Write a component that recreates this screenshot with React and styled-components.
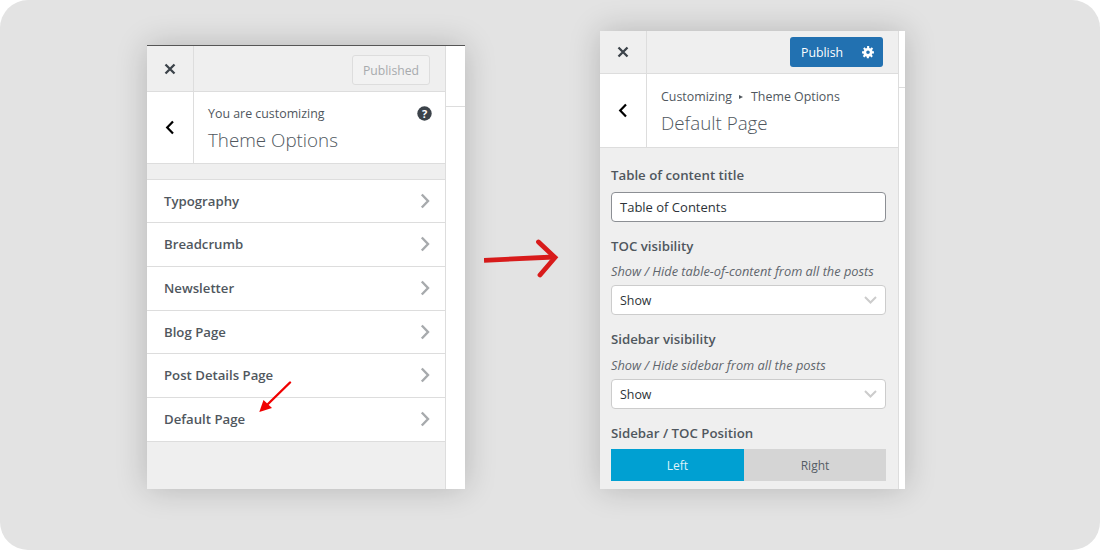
import React from 'react';
import styled, { createGlobalStyle } from 'styled-components';

const GlobalStyle = createGlobalStyle`
  html, body {
    margin: 0;
    background: #fff;
    font-family: "Open Sans", "Liberation Sans", sans-serif;
  }
  * { box-sizing: border-box; }
`;

const Stage = styled.div`
  width: 1100px;
  height: 550px;
  background: #e3e3e3;
  border-radius: 28px;
  padding: 0 0 61px 147px;
  display: flex;
  align-items: flex-end;
  overflow: hidden;
`;

const Shot = styled.div`
  position: relative;
  flex: none;
  width: ${p => p.$width}px;
  height: ${p => p.$height}px;
  background: #fff;
  box-shadow: 0 0 30px rgba(0, 0, 0, 0.2);
  border-top: ${p => (p.$topLine ? '1px solid #555' : 'none')};
  display: flex;
`;

const Panel = styled.div`
  width: ${p => p.$width}px;
  flex: none;
  height: 100%;
  background: #efefef;
  border-right: 1px solid #ddd;
  display: flex;
  flex-direction: column;
`;

const Side = styled.div`
  flex: 1;
  height: ${p => p.$lineAt}px;
  border-bottom: 1px solid #ddd;
`;

const Topbar = styled.div`
  height: ${p => p.$height}px;
  flex: none;
  display: flex;
  align-items: center;
  justify-content: space-between;
  border-bottom: 1px solid #ddd;
  padding-right: ${p => p.$pad}px;
`;

const CloseCell = styled.div`
  width: 47px;
  height: 100%;
  border-right: 1px solid #ddd;
  display: flex;
  align-items: center;
  justify-content: center;
  color: #3c434a;
`;

const PublishedButton = styled.div`
  width: 78px;
  height: 30px;
  margin-top: 2px;
  border: 1px solid #ddd;
  border-radius: 3px;
  background: #f2f2f2;
  color: #a7aaad;
  font-size: 12.2px;
  line-height: 30px;
  text-align: center;
`;

const PublishGroup = styled.div`
  width: 93px;
  height: 30px;
  background: #2271b1;
  border-radius: 3px;
  color: #fff;
  font-size: 12.3px;
  display: flex;
  align-items: center;
  justify-content: space-between;
  padding: 0 8px 0 11px;
`;

const Info = styled.div`
  height: ${p => p.$height}px;
  flex: none;
  background: #fff;
  border-bottom: 1px solid #ddd;
  display: flex;
`;

const BackCell = styled.div`
  width: 47px;
  flex: none;
  border-right: 1px solid #ddd;
  display: flex;
  align-items: center;
  justify-content: center;
  color: #000;
`;

const InfoText = styled.div`
  flex: 1;
  padding: ${p => p.$top}px 14px 0 14px;
  position: relative;
`;

const Crumb = styled.div`
  font-size: 12.4px;
  line-height: 18px;
  color: #50575e;
  display: flex;
  align-items: center;
`;

const CrumbMark = styled.span`
  width: 0;
  height: 0;
  margin: 0 8px 0 7px;
  border-left: 4px solid #50575e;
  border-top: 2.5px solid transparent;
  border-bottom: 2.5px solid transparent;
`;

const InfoTitle = styled.div`
  font-size: 18.8px;
  font-weight: 300;
  line-height: 26px;
  margin-top: 4px;
  color: #50575e;
`;

const HelpIcon = styled.svg`
  position: absolute;
  top: 14px;
  right: 13px;
`;

const List = styled.ul`
  list-style: none;
  margin: 15px 0 0;
  padding: 0;
  border-top: 1px solid #ddd;
`;

const Row = styled.li`
  height: 43.75px;
  background: #fff;
  border-bottom: 1px solid #ddd;
  display: flex;
  align-items: center;
  justify-content: space-between;
  padding: 0 15px 0.6px 17px;
  font-size: 13.2px;
  font-weight: 600;
  color: #50575e;

  &:first-child {
    height: 43px;
  }
`;

const Chevron = styled.svg`
  color: #a7aaad;
  flex: none;
`;

const ArrowSlot = styled.div`
  flex: none;
  width: 135px;
  height: 444px;
  padding: 190px 0 0 19px;
`;

const Form = styled.div`
  padding: 18px 12px 0 11px;
  display: flex;
  flex-direction: column;
`;

const Label = styled.div`
  font-size: 13.25px;
  font-weight: 600;
  line-height: 18px;
  color: #50575e;
`;

const Hint = styled.div`
  font-size: 12.8px;
  font-style: italic;
  line-height: 18px;
  margin-top: ${p => p.$top}px;
  color: #5f666d;
`;

const Field = styled.div`
  height: 30px;
  margin-top: ${p => p.$top}px;
  margin-bottom: 15px;
  background: #fff;
  border: 1px solid ${p => (p.$dark ? '#8c8f94' : '#ccc')};
  border-radius: 4px;
  padding: 0 8px;
  font-size: ${p => (p.$dark ? 13 : 12.4)}px;
  color: #2c3338;
  display: flex;
  align-items: center;
  justify-content: space-between;
`;

const Switch = styled.div`
  display: flex;
  height: 32px;
  margin-top: 7px;
`;

const SwitchOption = styled.div`
  width: ${p => p.$width}px;
  background: ${p => (p.$active ? '#00a0d2' : '#d5d5d5')};
  color: ${p => (p.$active ? '#dff3fa' : '#555d66')};
  font-size: 12px;
  line-height: 33px;
  text-align: center;
`;

const PointerArrow = styled.svg`
  position: absolute;
  left: 112px;
  top: 335px;
`;

const CloseIcon = () => (
  <svg width="12" height="12" viewBox="0 0 12 12">
    <path d="M1.5 1.5l9 9M10.5 1.5l-9 9" stroke="currentColor" strokeWidth="2.3" fill="none" />
  </svg>
);

const BackIcon = () => (
  <svg width="10" height="15" viewBox="0 0 10 15">
    <path d="M8 1.5L2.2 7.5 8 13.5" stroke="currentColor" strokeWidth="2.2" fill="none" />
  </svg>
);

const ChevronIcon = () => (
  <Chevron width="10" height="16" viewBox="0 0 10 16">
    <path d="M1.8 1.5L8 8 1.8 14.5" stroke="currentColor" strokeWidth="2.4" fill="none" />
  </Chevron>
);

const SelectCaret = () => (
  <svg width="13" height="8" viewBox="0 0 13 8">
    <path d="M1 1l5.5 5.5L12 1" stroke="#ccc" strokeWidth="2" fill="none" />
  </svg>
);

const GearIcon = () => (
  <svg width="14" height="14" viewBox="0 0 20 20">
    <path
      fill="#fff"
      fillRule="evenodd"
      d="M18.5 12h-2.4c-.17.7-.44 1.35-.81 1.93l1.7 1.7-2.1 2.1-1.7-1.7c-.58.36-1.23.63-1.91.79V19h-3v-2.18c-.68-.16-1.33-.43-1.91-.79l-1.7 1.7-2.12-2.12 1.7-1.7c-.36-.58-.63-1.23-.79-1.91H1.5V9h2.37c.16-.7.44-1.35.8-1.94L2.97 5.36l2.1-2.1 1.7 1.7c.58-.37 1.24-.64 1.93-.81V1.5h3v2.68c.68.16 1.33.43 1.91.79l1.7-1.7 2.12 2.12-1.7 1.7c.36.59.64 1.24.8 1.94h1.97v3zM10 13c1.38 0 2.5-1.12 2.5-2.5S11.38 8 10 8s-2.5 1.12-2.5 2.5S8.62 13 10 13z"
    />
  </svg>
);

const items = ['Typography', 'Breadcrumb', 'Newsletter', 'Blog Page', 'Post Details Page', 'Default Page'];

export default function App() {
  return (
    <>
      <GlobalStyle />
      <Stage>
        <Shot $width={318} $height={444} $topLine>
          <Panel $width={299}>
            <Topbar $height={46} $pad={15}>
              <CloseCell><CloseIcon /></CloseCell>
              <PublishedButton>Published</PublishedButton>
            </Topbar>
            <Info $height={72}>
              <BackCell><BackIcon /></BackCell>
              <InfoText $top={13}>
                <Crumb>You are customizing</Crumb>
                <InfoTitle>Theme Options</InfoTitle>
                <HelpIcon width="15" height="15" viewBox="0 0 15 15">
                  <circle cx="7.5" cy="7.5" r="7.2" fill="#3c434a" />
                  <text x="7.5" y="11.5" fontSize="11" fontWeight="700" textAnchor="middle" fill="#fff">?</text>
                </HelpIcon>
              </InfoText>
            </Info>
            <List>
              {items.map(item => (
                <Row key={item}>
                  {item}
                  <ChevronIcon />
                </Row>
              ))}
            </List>
          </Panel>
          <Side $lineAt={61} />
          <PointerArrow width="36" height="36" viewBox="0 0 36 36">
            <path d="M31 1.5L9 23" stroke="#f00000" strokeWidth="2.4" strokeLinecap="round" fill="none" />
            <path d="M0.3 31L4.5 19l8.5 8z" fill="#f00000" />
          </PointerArrow>
        </Shot>
        <ArrowSlot>
          <svg width="80" height="44" viewBox="0 0 80 44">
            <path d="M0 25.3L70 22" stroke="#d81b1b" strokeWidth="4.8" fill="none" />
            <path
              d="M54.5 7L71 22.5 56 40"
              stroke="#d81b1b"
              strokeWidth="4.8"
              strokeLinecap="round"
              strokeLinejoin="miter"
              fill="none"
            />
          </svg>
        </ArrowSlot>
        <Shot $width={305} $height={458}>
          <Panel $width={299}>
            <Topbar $height={43} $pad={15}>
              <CloseCell><CloseIcon /></CloseCell>
              <PublishGroup>
                Publish
                <GearIcon />
              </PublishGroup>
            </Topbar>
            <Info $height={74}>
              <BackCell><BackIcon /></BackCell>
              <InfoText $top={14}>
                <Crumb>Customizing<CrumbMark />Theme Options</Crumb>
                <InfoTitle>Default Page</InfoTitle>
              </InfoText>
            </Info>
            <Form>
              <Label>Table of content title</Label>
              <Field $dark $top={8}>Table of Contents</Field>
              <Label>TOC visibility</Label>
              <Hint $top={7}>Show / Hide table-of-content from all the posts</Hint>
              <Field $top={5}>Show<SelectCaret /></Field>
              <Label>Sidebar visibility</Label>
              <Hint $top={8}>Show / Hide sidebar from all the posts</Hint>
              <Field $top={5}>Show<SelectCaret /></Field>
              <Label>Sidebar / TOC Position</Label>
              <Switch>
                <SwitchOption $active $width={133}>Left</SwitchOption>
                <SwitchOption $width={142}>Right</SwitchOption>
              </Switch>
            </Form>
          </Panel>
          <Side $lineAt={57} />
        </Shot>
      </Stage>
    </>
  );
}
